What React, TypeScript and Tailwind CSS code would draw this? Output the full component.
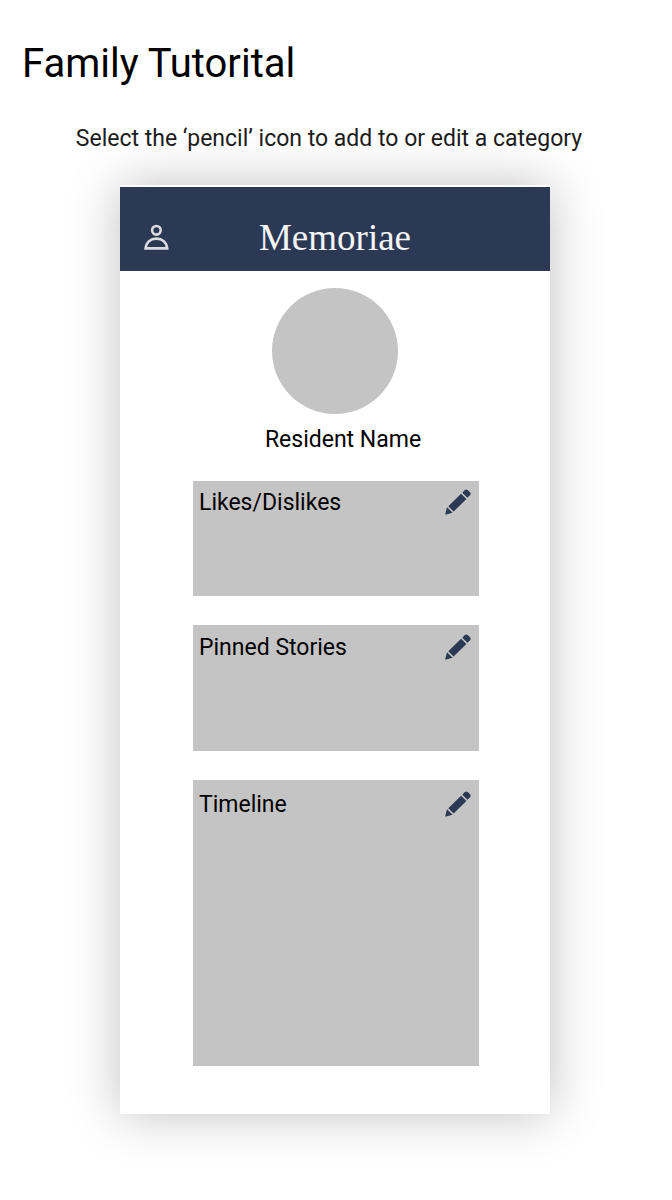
function PencilIcon() {
  return (
    <svg viewBox="0 0 26 26" className="size-[26px] fill-[#2c3955]" aria-hidden="true">
      <path d="M17.3 3.7 19.8 1.1Q21.2-.2 22.6 1L25 3.3Q26.4 4.8 25 6.2L22.4 8.8Z" />
      <path d="M16.1 4.7 21.4 10 8.6 22.6 3.3 17.3Z" />
      <path d="M2 18.2 7.6 23.7 1.2 25.6Q.1 25.8.3 24.7Z" />
    </svg>
  );
}

function PersonIcon() {
  return (
    <svg viewBox="0 0 26 27" className="h-[27px] w-[26px] fill-none stroke-[#dddddd] stroke-[2.6]" aria-hidden="true">
      <circle cx="13.4" cy="6.3" r="4.3" />
      <path d="M2.6 24.4C3.2 18.2 7.7 14.6 13.4 14.6S23.6 18.2 24.2 24.4Z" />
    </svg>
  );
}

const categories = [
  { title: "Likes/Dislikes", box: "h-[115px] pt-2" },
  { title: "Pinned Stories", box: "h-[126px] pt-[9px]" },
  { title: "Timeline", box: "h-[286px] pt-[11px]" },
];

export default function App() {
  return (
    <main className="min-h-screen bg-white pt-10 pr-6 pb-[86px] pl-[22px] font-['Roboto',sans-serif] text-black">
      <h1 className="text-[40px] leading-[48px]">Family Tutorital</h1>
      <p className="mt-[35px] pr-3 text-center text-[23px] leading-8 text-[#1c1c1c]">
        Select the ‘pencil’ icon to add to or edit a category
      </p>

      <section className="mx-auto mt-[30px] w-full max-w-[430px] bg-white pt-0.5 pb-12 shadow-[0_0_48px_rgba(0,0,0,0.25)]">
        <header className="grid h-[84px] grid-cols-[1fr_auto_1fr] items-end bg-[#2c3955] px-[23px] pb-[13px]">
          <button type="button" aria-label="Profile" className="mb-[7px] justify-self-start">
            <PersonIcon />
          </button>
          <h2 className="font-['Liberation_Serif',serif] text-[37px] leading-10 text-[#f5f5f5]">Memoriae</h2>
        </header>

        <div className="mx-auto mt-[17px] size-[126px] rounded-full bg-[#c4c4c4]" />
        <p className="mt-[10px] pl-4 text-center text-[23px] leading-8">Resident Name</p>

        <div className="mt-[25px] flex flex-col gap-[29px] pr-[71px] pl-[73px]">
          {categories.map(({ title, box }) => (
            <article key={title} className={`flex items-start justify-between bg-[#c4c4c4] pr-2 pl-1.5 ${box}`}>
              <h3 className="text-[23px] leading-7">{title}</h3>
              <button type="button" aria-label={`Edit ${title}`}>
                <PencilIcon />
              </button>
            </article>
          ))}
        </div>
      </section>
    </main>
  );
}
